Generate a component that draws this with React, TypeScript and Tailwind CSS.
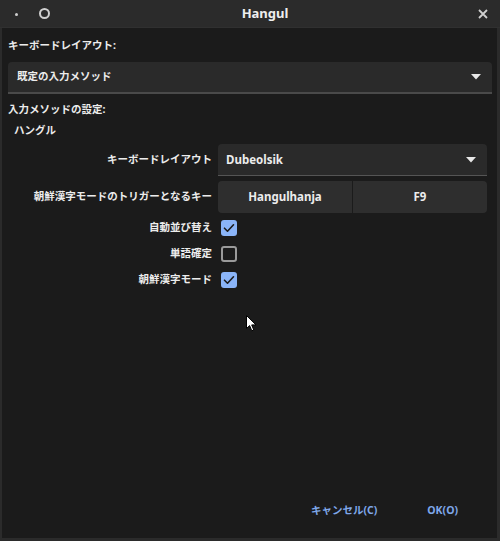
import React from "react";

const jp = { fontFamily: '"Noto Sans", "Noto Sans CJK JP", sans-serif' };

function Caret() {
  return (
    <svg width="10" height="6" viewBox="0 0 10 6" className="shrink-0">
      <path d="M0 0 L10 0 L5 5.5 Z" fill="#e8e8e8" />
    </svg>
  );
}

function Check({ checked }: { checked: boolean }) {
  if (checked) {
    return (
      <div className="w-[16px] h-[16px] rounded-[3px] bg-[#8ab4f8] flex items-center justify-center">
        <svg width="12" height="10" viewBox="0 0 12 10">
          <path d="M1.5 5.2 L4.5 8.2 L10.5 1.8" stroke="#1b1b1b" strokeWidth="1.6" fill="none" strokeLinecap="round" strokeLinejoin="round" />
        </svg>
      </div>
    );
  }
  return <div className="w-[16px] h-[16px] rounded-[3px] border-2 border-[#9a9a9a]" />;
}

export default function App() {
  const rows: [string, boolean][] = [
    ["自動並び替え", true],
    ["単語確定", false],
    ["朝鮮漢字モード", true],
  ];
  return (
    <div className="w-[500px] h-[541px] bg-[#2b2b2b] flex flex-col relative overflow-hidden" style={jp}>
      {/* title bar */}
      <div className="h-[28px] flex items-center relative shrink-0 border-b border-[#303030]">
        <div className="absolute left-[15px] top-[13px] w-[3px] h-[3px] rounded-full bg-[#cfcfcf]" />
        <div className="absolute left-[39px] top-[8px] w-[11px] h-[11px] rounded-full border-2 border-[#d0d0d0]" />
        <div className="w-full flex justify-center pl-[30px]">
          <span className="text-[13px] font-bold text-[#eeeeee]">Hangul</span>
        </div>
        <svg className="absolute left-[478px] top-[9px]" width="10" height="10" viewBox="0 0 10 10">
          <path d="M1 1 L9 9 M9 1 L1 9" stroke="#cfcfcf" strokeWidth="1.8" />
        </svg>
      </div>

      {/* content */}
      <div className="flex-1 ml-[2px] mr-[3px] mb-[3px] bg-[#1b1b1b] flex flex-col pl-[6px] pr-[5px] text-[#ececec]">
        <div className="mt-[11px] h-[14px] flex items-center text-[10.5px] font-bold">キーボードレイアウト:</div>
        <div className="mt-[9px] h-[32px] bg-[#2a2a2a] rounded-t-[4px] border-b-2 border-[#4a4a4a] flex items-center justify-between pl-[9px] pr-[11px]">
          <span className="text-[10.5px] font-bold">既定の入力メソッド</span>
          <Caret />
        </div>
        <div className="mt-[9px] h-[14px] flex items-center text-[10.5px] font-bold">入力メソッドの設定:</div>
        <div className="mt-[7px] h-[14px] flex items-center text-[10.5px] font-bold pl-[6px]">ハングル</div>

        <div className="mt-[6px] grid grid-cols-[204px_1fr] gap-x-[6px] pr-[5px] items-center">
          <div className="text-right text-[10.5px] font-bold">キーボードレイアウト</div>
          <div className="h-[32px] bg-[#2a2a2a] rounded-t-[4px] border-b border-[#555555] flex items-center justify-between pl-[8px] pr-[11px]">
            <span className="text-[11.5px] font-bold">Dubeolsik</span>
            <Caret />
          </div>

          <div className="text-right text-[10.5px] font-bold mt-[5px]">朝鮮漢字モードのトリガーとなるキー</div>
          <div className="h-[32px] mt-[5px] flex gap-[1px]">
            <div className="flex-1 bg-[#2e2e2e] rounded-l-[4px] flex items-center justify-center text-[11.5px] font-bold">Hangulhanja</div>
            <div className="flex-1 bg-[#2e2e2e] rounded-r-[4px] flex items-center justify-center text-[11.5px] font-bold">F9</div>
          </div>
        </div>

        <div className="mt-[7px] grid grid-cols-[204px_1fr] gap-x-[6px] gap-y-[10px] items-center">
          {rows.map(([label, c]) => (
            <React.Fragment key={label}>
              <div className="text-right text-[10.5px] font-bold h-[16px] flex items-center justify-end">{label}</div>
              <div className="pl-[3px]"><Check checked={c} /></div>
            </React.Fragment>
          ))}
        </div>

        <div className="flex-1" />
        <div className="h-[30px] mb-[12px] flex items-center justify-end pr-[34px] gap-[50px] text-[10.5px] font-bold text-[#7fa8ea]">
          <span>キャンセル(C)</span>
          <span>OK(O)</span>
        </div>
      </div>

      {/* mouse pointer */}
      <svg className="absolute left-[246px] top-[315px]" width="11" height="17" viewBox="0 0 11 17">
        <path d="M0.5 0.5 L0.5 13.5 L3.6 10.6 L5.8 15.8 L7.8 15 L5.7 9.9 L10 9.9 Z" fill="#ffffff" stroke="#000000" strokeWidth="1" strokeLinejoin="round" />
      </svg>
    </div>
  );
}
